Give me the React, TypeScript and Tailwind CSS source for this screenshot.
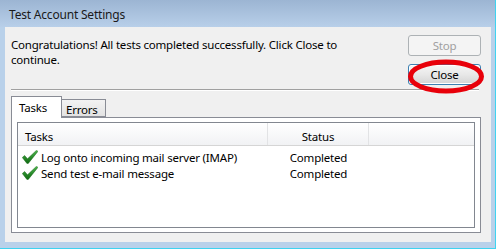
import React from 'react';

const font = { fontFamily: '"Noto Sans", "Open Sans", sans-serif' };

function Check() {
  return (
    <svg width="16" height="14" viewBox="0 0 16 14" className="shrink-0">
      <defs>
        <linearGradient id="chk" x1="0" y1="0" x2="0" y2="1">
          <stop offset="0" stopColor="#4cb54c" />
          <stop offset="1" stopColor="#0f6a12" />
        </linearGradient>
      </defs>
      <polygon points="0.3,7.5 2.6,5.5 5.5,8.8 14.6,0.2 15.9,1.4 6.3,13.4 4.9,13.4" fill="url(#chk)" stroke="#1a6b1a" strokeWidth="0.5" />
    </svg>
  );
}

export default function App() {
  return (
    <div
      className="w-[496px] h-[249px] flex flex-col bg-[#b9d1ea] border-r border-b border-[#3fd3f0] overflow-hidden text-[11.5px] tracking-[-0.2px] text-black"
      style={font}
    >
      {/* title bar */}
      <div className="h-[27px] shrink-0 bg-gradient-to-b from-[#9cb5d3] to-[#b8cfe9] pl-[9px] pt-[6px] text-[12px] leading-[17px] text-[#1a1a1a]">
        Test Account Settings
      </div>

      {/* client area */}
      <div className="flex-1 ml-[5px] mr-[4px] mb-[6px] bg-[#f0f0f0] flex flex-col pl-[6px] pr-[10px] pt-[8px]">
        <div className="flex justify-between">
          <p className="pt-[2px] leading-[15px]">
            Congratulations! All tests completed successfully. Click Close to<br />continue.
          </p>
          <div className="w-[73px] flex flex-col gap-[8px] shrink-0">
            <div className="h-[21px] flex items-center justify-center rounded-[3px] border border-[#adb2b5] bg-[#f4f4f4] text-[#a0a0a0]">
              Stop
            </div>
            <div className="relative">
              <div className="h-[21px] flex items-center justify-center rounded-[3px] border border-[#3c7fb1] bg-gradient-to-b from-[#f6f6f6] via-[#e8e8e8] to-[#d4d4d4] shadow-[inset_0_0_0_1px_#ffffff]">
                Close
              </div>
              <svg className="absolute left-[-1px] top-[-5px]" width="80" height="36" viewBox="0 0 80 36">
                <ellipse cx="39" cy="17.5" rx="35.5" ry="14.5" fill="none" stroke="#e8000a" strokeWidth="5" />
              </svg>
            </div>
          </div>
        </div>

        {/* separator */}
        <div className="mt-[4px] mr-[2px] h-[2px] border-t border-[#a0a0a0] border-b border-b-white" />

        {/* tabs */}
        <div className="mt-[4px] flex items-end h-[22px] relative z-10">
          <div className="h-[22px] w-[51px] bg-white border border-b-0 border-[#898c95] pl-[7px] pt-[3px] leading-[15px] -mb-px">
            Tasks
          </div>
          <div className="h-[18px] w-[44px] bg-gradient-to-b from-[#f2f2f2] to-[#e3e3e3] border border-l-0 border-[#898c95] pl-[4px] pt-[2px] leading-[15px]">
            Errors
          </div>
        </div>

        {/* panel */}
        <div className="h-[116px] bg-white border border-[#898c95] px-[5px] pt-[4px]">
          <div className="h-[106px] border border-[#828790] flex flex-col">
            <div className="h-[23px] flex bg-gradient-to-b from-[#ffffff] to-[#f1f2f4] border-b border-[#d5d5d5]">
              <div className="w-[250px] pl-[7px] pt-[6px] leading-[15px] border-r border-[#e2e3e5]">Tasks</div>
              <div className="w-[101px] text-center pt-[6px] leading-[15px] border-r border-[#e2e3e5]">Status</div>
              <div className="flex-1" />
            </div>
            <div className="pt-[3px] flex flex-col">
              {['Log onto incoming mail server (IMAP)', 'Send test e-mail message'].map((t) => (
                <div key={t} className="h-[16px] flex items-center">
                  <div className="w-[250px] flex items-center pl-[4px] gap-[3px] leading-[15px]">
                    <Check />
                    <span>{t}</span>
                  </div>
                  <div className="w-[101px] text-center leading-[15px]">Completed</div>
                </div>
              ))}
            </div>
          </div>
        </div>
      </div>
    </div>
  );
}
